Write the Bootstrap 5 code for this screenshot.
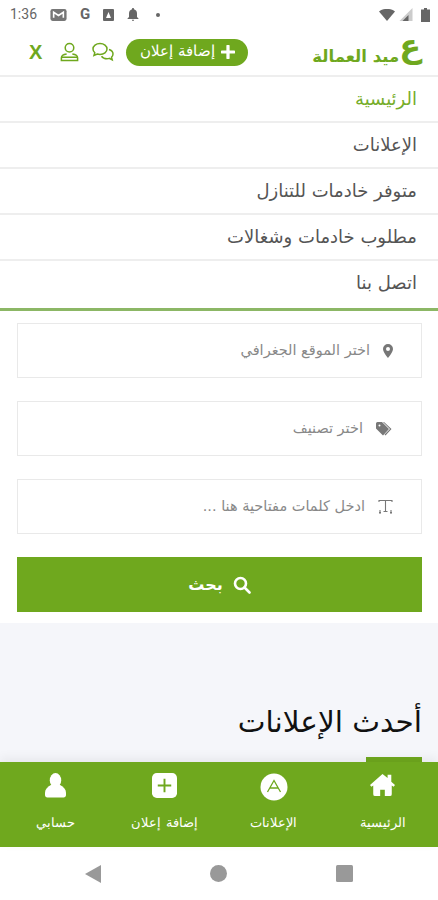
<!DOCTYPE html>
<html lang="ar" dir="rtl">
<head>
    <meta charset="UTF-8">
    <meta name="viewport" content="width=device-width, initial-scale=1.0">
    <title>عميد العمالة</title>
    <link rel="stylesheet" href="https://cdn.jsdelivr.net/npm/bootstrap@5.3.0/dist/css/bootstrap.min.css">
    <style>
        body {
            background-color: #fff;
            font-family: "DejaVu Sans", sans-serif;
            color: #333;
        }
        .app-page { width: 438px; height: 900px; overflow: hidden; }
        .status-bar { height: 29px; padding: 0 8px 0 10px; color: #666; font-family: Roboto, sans-serif; font-size: 14px; }
        .status-left { gap: 13px; }
        .top-bar { height: 48px; padding: 0 17px 0 29px; border-bottom: 2px solid #eee; }
        .logo-text { color: #6fa81e; font-size: 16.500px; font-weight: 700; letter-spacing: -1px; line-height: 1; margin-top: 10px; }
        .logo-big { font-size: 32px; line-height: 26px; color: #6fa81e; font-weight: 700; margin-bottom: 12px; }
        .add-pill { background: #6fa81e; color: #fff; height: 27px; width: 122px; border-radius: 14px; font-size: 14.500px; font-weight: 300; gap: 6px; margin-left: 11px; }
        .chat-icon { margin-left: 12px; }
        .user-icon { margin-left: 18px; }
        .close-x { color: #6fa81e; font: 700 20px "Liberation Sans", sans-serif; }
        .menu-link { display: block; height: 46px; line-height: 43px; padding: 0 21px; font-size: 18px; color: #555; border-bottom: 2px solid #eee; text-decoration: none; }
        .menu-link.is-active { color: #76ad2a; }
        .menu-link.is-last { height: 50px; border-bottom: 3px solid #8cb765; }
        .search-area { padding: 12px 16px 0 17px; height: 312px; }
        .search-field { height: 55px; border: 1px solid #e9e9e9; padding: 0 28px; gap: 13px; color: #888; font-size: 14.500px; background: #fff; margin-bottom: 23px; }
        .search-go { height: 55px; background: #6fa81e; color: #fff; border: 0; border-radius: 0; font-size: 16px; font-weight: 700; gap: 10px; width: 100%; }
        .search-go:hover { background: #6fa81e; color: #fff; }
        .latest-area { height: 139px; background: #f5f6fa; padding: 0 16px; }
        .latest-title { font-size: 29.500px; font-weight: 400; color: #111; margin: 0; padding-top: 77px; line-height: 44px; }
        .latest-line { width: 56px; height: 5px; background: #6fa81e; margin-top: 13px; }
        .tab-bar { height: 85px; background: #6fa81e; color: #fff; box-shadow: 0 -4px 10px rgba(0,0,0,.06); padding: 0 1px; }
        .tab-item { width: 109px; font-size: 13px; font-weight: 300; padding-top: 11px; }
        .tab-icon { height: 28px; margin-bottom: 12px; }
        .sys-bar { height: 53px; gap: 109px; }
    </style>
</head>
<body>
<div class="app-page d-flex flex-column">

    <div class="status-bar d-flex align-items-center justify-content-between" dir="ltr">
        <div class="status-left d-flex align-items-center">
            <span>1:36</span>
            <svg width="17" height="14" viewBox="0 0 15 13"><rect x="0" y="1" width="15" height="11" rx="2" fill="#777"/><path d="M3 9V4l4.500 3L12 4v5" fill="none" stroke="#fff" stroke-width="1.500"/></svg>
            <span class="fw-bold" style="font-size:15px">G</span>
            <svg width="11" height="12" viewBox="0 0 11 12"><rect width="11" height="12" rx="1" fill="#666"/><path d="M3 9l2.500-6L8 9z" fill="#fff"/></svg>
            <svg width="12" height="13" viewBox="0 0 12 13"><path d="M6 0c.8 0 1 .6 1 1.200C9 1.800 10 3.500 10 5.500V9l1.500 1.500v.5H.5v-.5L2 9V5.500C2 3.500 3 1.800 5 1.200 5 .6 5.200 0 6 0zM4.800 11.800h2.400C7 12.600 6.500 13 6 13s-1-.4-1.200-1.200z" fill="#666"/></svg>
            <svg width="12" height="12" viewBox="0 0 12 12"><circle cx="6" cy="6" r="2" fill="#666"/></svg>
        </div>
        <div class="d-flex align-items-center">
            <svg width="16" height="12" viewBox="0 0 16 12"><path d="M0 2.500C4.500-1 11.500-1 16 2.500L8 12z" fill="#666"/></svg>
            <svg width="14" height="13" viewBox="0 0 13 13" class="ms-1"><path d="M0 13L13 0v13z" fill="#ccc"/><path d="M3 13l6-6v6z" fill="#666"/></svg>
            <svg width="9" height="14" viewBox="0 0 9 14" class="ms-2"><path d="M3 0h3v1.500h3V14H0V1.500h3z" fill="#666"/></svg>
        </div>
    </div>

    <div class="top-bar d-flex align-items-center justify-content-between">
        <div class="d-flex align-items-center">
            <span class="logo-big">ع</span>
            <span class="logo-text">ميد العمالة</span>
        </div>
        <div class="d-flex align-items-center">
            <div class="add-pill d-flex align-items-center justify-content-center">
                <svg width="14" height="14" viewBox="0 0 13 13"><path d="M6.500 1v11M1 6.500h11" stroke="#fff" stroke-width="3" stroke-linecap="round"/></svg>
                <span>إضافة إعلان</span>
            </div>
            <svg class="chat-icon" width="24" height="20" viewBox="0 0 24 20" fill="none" stroke="#6fa81e" stroke-width="1.500"><path d="M16 7c0-3-3-5.500-7-5.500S2 4 2 7c0 1.500.7 2.800 1.800 3.800L3 13.500l3.300-1.500c.9.300 1.800.4 2.700.4 4 0 7-2.400 7-5.400z" fill="#fff"/><path d="M18 7.500c2.300.7 4 2.500 4 4.500 0 1.300-.6 2.400-1.500 3.200l.7 2.600-3-1.400c-.7.200-1.500.3-2.200.3-2.400 0-4.400-1-5.500-2.500"/></svg>
            <svg class="user-icon" width="19" height="20" viewBox="0 0 19 21" fill="none" stroke="#6fa81e" stroke-width="1.600"><circle cx="9.500" cy="6" r="4.500"/><path d="M6.500 12.500C3 13 1 14.500 1 16.500V19.500h17v-3c0-2-2-3.500-5.500-4" /><path d="M1.500 16h16"/></svg>
            <span class="close-x">X</span>
        </div>
    </div>

    <nav>
        <a class="menu-link is-active" href="#">الرئيسية</a>
        <a class="menu-link" href="#">الإعلانات</a>
        <a class="menu-link" href="#">متوفر خادمات للتنازل</a>
        <a class="menu-link" href="#">مطلوب خادمات وشغالات</a>
        <a class="menu-link is-last" href="#">اتصل بنا</a>
    </nav>

    <div class="search-area d-flex flex-column">
        <div class="search-field d-flex align-items-center">
            <svg width="10" height="14" viewBox="0 0 10 14"><path fill-rule="evenodd" d="M5 0a5 5 0 0 1 5 5c0 3-5 9-5 9S0 8 0 5a5 5 0 0 1 5-5zm0 3a2 2 0 1 0 0 4 2 2 0 0 0 0-4z" fill="#777"/></svg>
            <span>اختر الموقع الجغرافي</span>
        </div>
        <div class="search-field d-flex align-items-center">
            <svg width="17" height="14" viewBox="0 0 17 14"><path fill-rule="evenodd" d="M0 1.500A1.500 1.500 0 0 1 1.500 0H6l7 7-6 6.500-7-7zM3.500 2.500a1 1 0 1 0 0 2 1 1 0 0 0 0-2z" fill="#777"/><path d="M8 0l7.500 7-6 6.500-1-1L14 7 7 0z" fill="#777"/></svg>
            <span>اختر تصنيف</span>
        </div>
        <div class="search-field d-flex align-items-center">
            <svg width="15" height="15" viewBox="0 0 15 15" fill="none" stroke="#777" stroke-width="1.100"><path d="M1 3V1.500h13V3M7.500 1.500V12M5.500 12.500h4M1 13.500h2M12 13.500h2M2 11v4M13 11v4"/></svg>
            <span>ادخل كلمات مفتاحية هنا ...</span>
        </div>
        <button type="button" class="btn search-go d-flex align-items-center justify-content-center">
            <svg width="18" height="18" viewBox="0 0 18 18" fill="none" stroke="#fff" stroke-width="2.600"><circle cx="7.500" cy="7.500" r="5.500"/><path d="M11.500 11.500L16.500 16.500" stroke-linecap="round"/></svg>
            <span>بحث</span>
        </button>
    </div>

    <div class="latest-area">
        <h2 class="latest-title">أحدث الإعلانات</h2>
        <div class="latest-line"></div>
    </div>

    <div class="tab-bar d-flex justify-content-between">
        <div class="tab-item text-center">
            <div class="tab-icon"><svg width="25" height="24" viewBox="0 0 27 24"><path d="M13.500 0L0 12l1.500 2 2-1.500V22a2 2 0 0 0 2 2H11v-7h5v7h5.500a2 2 0 0 0 2-2v-9.500l2 1.500 1.500-2-4-3.500V1h-4v3.500z" fill="#fff"/></svg></div>
            الرئيسية
        </div>
        <div class="tab-item text-center">
            <div class="tab-icon"><svg width="28" height="28" viewBox="0 0 28 28"><circle cx="14" cy="14" r="13.500" fill="#fff"/><path d="M7.500 19L14 7.500 20.500 19M10 15h8" fill="none" stroke="#6fa81e" stroke-width="1.300"/></svg></div>
            الإعلانات
        </div>
        <div class="tab-item text-center">
            <div class="tab-icon"><svg width="25" height="25" viewBox="0 0 26 26"><rect width="26" height="26" rx="5" fill="#fff"/><path d="M13 6v14M6 13h14" stroke="#6fa81e" stroke-width="2"/></svg></div>
            إضافة إعلان
        </div>
        <div class="tab-item text-center">
            <div class="tab-icon"><svg width="21" height="25" viewBox="0 0 22 26"><ellipse cx="11" cy="7.500" rx="6" ry="7.500" fill="#fff"/><path d="M7 12C2.500 14.500 0 17 0 20.500V23c0 1.500 1 2.500 2.500 2.500h17c1.500 0 2.500-1 2.500-2.500v-2.500C22 17 19.500 14.500 15 12z" fill="#fff"/></svg></div>
            حسابي
        </div>
    </div>

    <div class="sys-bar d-flex align-items-center justify-content-center" dir="ltr">
        <svg width="16" height="18" viewBox="0 0 16 18"><path d="M16 0v18L0 9z" fill="#999"/></svg>
        <svg width="17" height="17" viewBox="0 0 17 17"><circle cx="8.500" cy="8.500" r="8.500" fill="#999"/></svg>
        <svg width="17" height="17" viewBox="0 0 17 17"><rect width="17" height="17" rx="1.500" fill="#999"/></svg>
    </div>
</div>
<script src="https://cdn.jsdelivr.net/npm/bootstrap@5.3.0/dist/js/bootstrap.bundle.min.js"></script>
</body>
</html>
